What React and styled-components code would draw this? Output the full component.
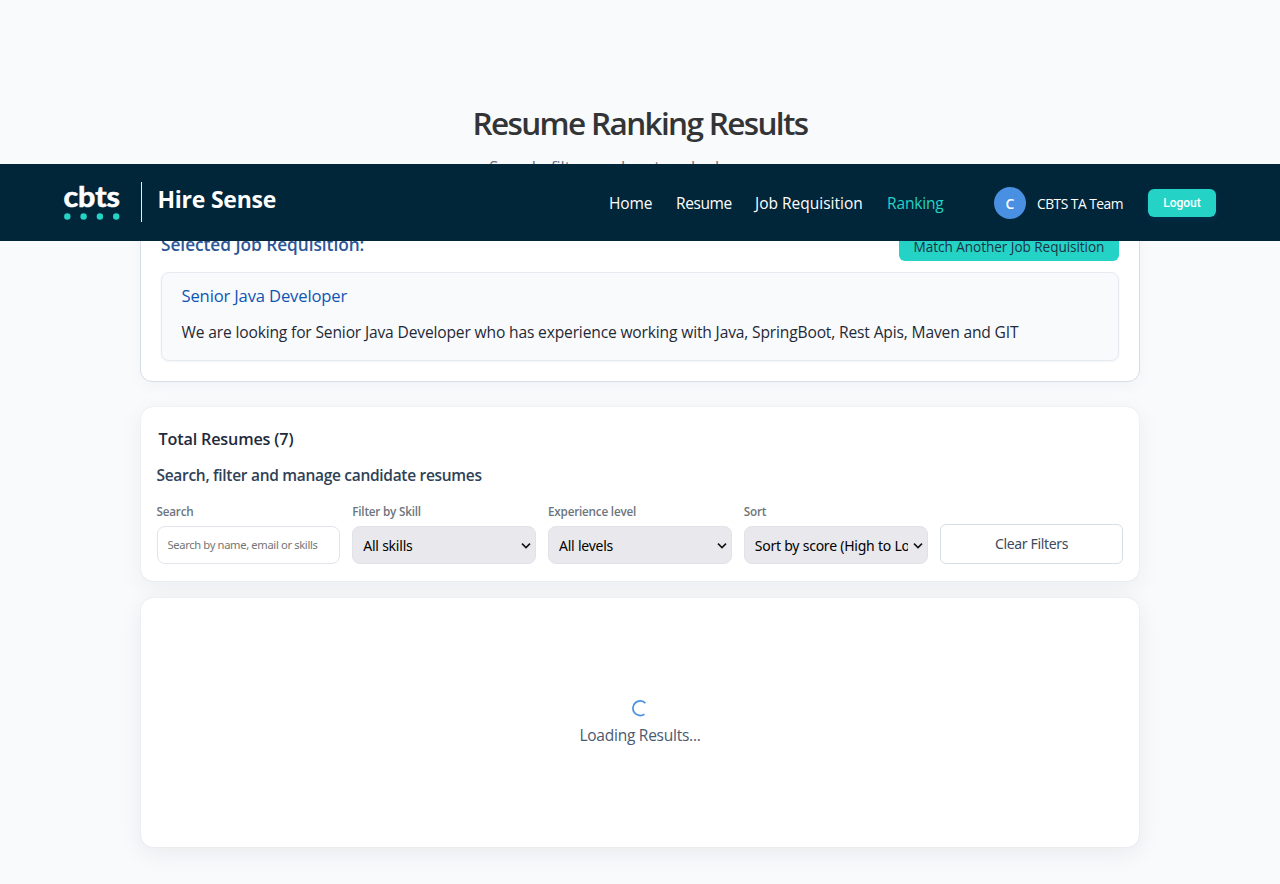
import React from "react";
import styled, { createGlobalStyle } from "styled-components";

const ui = `"Segoe UI", "Open Sans", "Noto Sans", sans-serif`;

const GlobalStyle = createGlobalStyle`
  *, *::before, *::after { box-sizing: border-box; }
  body {
    margin: 0;
    background: #f9fafc;
    font-family: ${ui};
    color: #1f2937;
    height: 884px;
    overflow: hidden;
  }
  h1, h2, h3, p { margin: 0; }
  button, input, select { font-family: "Noto Sans", sans-serif; }
`;

const Navbar = styled.header`
  position: absolute;
  top: 164px;
  left: 0;
  right: 0;
  z-index: 10;
  height: 77px;
  padding: 0 64px;
  display: flex;
  align-items: center;
  background: #022639;
  color: #fff;
  white-space: nowrap;
`;

const Brand = styled.div`
  display: flex;
  align-items: center;
  flex: 1;
  padding-bottom: 1px;
`;

const Divider = styled.span`
  width: 1px;
  height: 40px;
  margin: 0 15.5px 0 21px;
  background: #e6eef2;
`;

const BrandName = styled.span`
  font-size: 23px;
  font-weight: 700;
  line-height: 32px;
  letter-spacing: -0.25px;
  padding-bottom: 6px;
`;

const Nav = styled.nav`
  display: flex;
  gap: 24px;
  margin-right: 50px;
`;

const NavLink = styled.a`
  width: ${(p) => p.$w}px;
  font-size: 15.5px;
  line-height: 24px;
  letter-spacing: ${(p) => p.$ls || 0}px;
  color: ${(p) => (p.$active ? "#24d3c6" : "#fff")};
`;

const Avatar = styled.span`
  width: 32px;
  height: 32px;
  padding-top: 1px;
  border-radius: 50%;
  background: #4a90e2;
  display: flex;
  align-items: center;
  justify-content: center;
  font-size: 14px;
  font-weight: 600;
  margin-right: 11px;
`;

const UserName = styled.span`
  width: 87px;
  margin-right: 24px;
  padding-top: 2px;
  font-size: 13.8px;
  letter-spacing: -0.5px;
`;

const Logout = styled.button`
  width: 68px;
  height: 28px;
  border: 0;
  padding: 0;
  margin-top: 1px;
  border-radius: 6px;
  background: #24d3c6;
  color: #fff;
  font-family: Roboto, sans-serif;
  font-size: 12px;
  font-weight: 500;
  box-shadow: 0 2px 6px rgba(0, 70, 120, 0.35);
`;

const Page = styled.main`
  width: 1000px;
  margin: 0 auto;
  padding-top: 101px;
  display: flex;
  flex-direction: column;
`;

const PageHeading = styled.div`
  text-align: center;
  height: 97px;
`;

const Title = styled.h1`
  font-size: 31.5px;
  line-height: 44px;
  font-weight: 600;
  letter-spacing: -1.65px;
  color: #333436;
`;

const Subtitle = styled.p`
  margin-top: 9px;
  font-size: 16.7px;
  line-height: 26px;
  color: #6c757d;
`;

const JobCard = styled.section`
  height: 183.5px;
  padding: 27px 20px 20px;
  border: 1px solid #d5dde8;
  border-radius: 12px;
  background: #fff;
  box-shadow: 0 4px 16px rgba(15, 35, 60, 0.03);
`;

const JobHeader = styled.div`
  display: flex;
  justify-content: space-between;
  align-items: flex-end;
  height: 35px;
`;

const JobHeading = styled.h2`
  font-size: 17.3px;
  line-height: 28px;
  font-weight: 600;
  letter-spacing: -0.05px;
  color: #2c5796;
  padding-bottom: 2px;
`;

const MatchButton = styled.button`
  width: 220px;
  height: 30px;
  border: 0;
  padding: 1px 0 0;
  border-radius: 6px;
  background: #24d3c6;
  color: #1d3345;
  font-family: ${ui};
  font-size: 13.6px;
  letter-spacing: -0.06px;
  white-space: nowrap;
`;

const JobBox = styled.div`
  height: 89px;
  margin-top: 11px;
  padding: 10px 20px 10px 19.5px;
  border: 1px solid #e5eaf0;
  border-radius: 8px;
  background: #f9fafc;
  box-shadow: 0 1px 3px rgba(15, 35, 60, 0.05);
`;

const JobTitle = styled.h3`
  font-size: 16.6px;
  font-weight: 400;
  line-height: 26px;
  letter-spacing: -0.15px;
  color: #0f55b3;
`;

const JobText = styled.p`
  margin-top: 10px;
  font-size: 15.6px;
  line-height: 26px;
  letter-spacing: -0.16px;
  color: #1f2937;
  white-space: nowrap;
`;

const FilterCard = styled.section`
  height: 174px;
  margin: 25px 1px 0 0.5px;
  padding: 19.5px 15.5px 16px 16px;
  border-radius: 12px;
  background: #fff;
  box-shadow: 0 0 1px rgba(30, 50, 80, 0.2), 0 6px 24px rgba(15, 23, 42, 0.06);
`;

const Total = styled.h2`
  padding-left: 2px;
  font-size: 16.2px;
  line-height: 26px;
  font-weight: 600;
  letter-spacing: -0.17px;
  color: #1f2a3d;
`;

const FilterHeading = styled.h3`
  margin-top: 10px;
  font-size: 15.5px;
  line-height: 26px;
  font-weight: 600;
  letter-spacing: -0.3px;
  color: #2f4156;
`;

const Filters = styled.div`
  display: grid;
  grid-template-columns: repeat(5, 1fr);
  gap: 11.8px;
  align-items: end;
  height: 65px;
  margin-top: 10.5px;
`;

const Field = styled.label`
  display: flex;
  flex-direction: column;
  gap: 7px;
  min-width: 0;
  font-size: 11.7px;
  line-height: 16px;
  font-weight: 600;
  letter-spacing: -0.2px;
  color: #6c757d;
`;

const Search = styled.input`
  width: 100%;
  height: 38px;
  padding: 0 10px;
  border: 1px solid #e2e5ea;
  border-radius: 8px;
  background: #fff;
  font-size: 11.2px;
  letter-spacing: -0.35px;
  outline: 0;
  &::placeholder { color: #757575; opacity: 1; }
`;

const SelectBox = styled.span`
  display: grid;
  align-items: center;
  & > * { grid-area: 1 / 1; }
  svg { justify-self: end; margin: 2px 5px 0 0; pointer-events: none; }
`;

const Select = styled.select`
  appearance: none;
  width: 100%;
  min-width: 0;
  height: 38px;
  padding: 2px 19px 0 10px;
  border: 1px solid #e0e2e9;
  border-radius: 8px;
  background-color: #e9e8ec;
  color: #000;
  font-size: 14px;
  letter-spacing: -0.23px;
`;

const ClearButton = styled.button`
  height: 40px;
  padding-bottom: 1px;
  border: 1px solid #d5dee8;
  border-radius: 6px;
  background: #fff;
  color: #3b4a5f;
  font-size: 14px;
  letter-spacing: -0.35px;
`;

const Results = styled.section`
  height: 249.5px;
  margin: 17px 1px 0 0.5px;
  padding-top: 1px;
  display: flex;
  flex-direction: column;
  align-items: center;
  justify-content: center;
  gap: 6px;
  border-radius: 12px;
  background: #fff;
  box-shadow: 0 0 1px rgba(30, 50, 80, 0.18), 0 6px 24px rgba(15, 23, 42, 0.07);
`;

const Loading = styled.p`
  padding-left: 0.5px;
  font-size: 15.5px;
  line-height: 24px;
  letter-spacing: -0.25px;
  color: #4a5a70;
`;

const LogoMark = styled.svg`
  display: block;
  overflow: visible;
`;

const Logo = () => (
  <LogoMark width="56" height="40" viewBox="0 0 56 40" role="img" aria-label="cbts">
    <text x="-0.6" y="24.8" textLength="56.6" lengthAdjust="spacingAndGlyphs" fontFamily="Lato, sans-serif" fontWeight="700" fontSize="28" fill="#fff" stroke="#fff" strokeWidth="0.6">cbts</text>
    {[3.3, 19.6, 35.9, 52.2].map((x) => (
      <circle key={x} cx={x} cy="34.5" r="3.2" fill="#24d3c6" />
    ))}
  </LogoMark>
);

const Spinner = () => (
  <svg width="18" height="18" viewBox="0 0 18 18" fill="none" stroke="#4a90e2" strokeWidth="1.7">
    <path d="M14.4 4.1A7.3 7.3 0 1 0 13.4 15.2" />
  </svg>
);

const Chevron = () => (
  <svg width="10" height="8" viewBox="0 0 10 8" fill="none" stroke="#111" strokeWidth="1.5">
    <path d="M1 1.6L5 5.6L9 1.6" />
  </svg>
);

const links = [
  { label: "Home", w: 43, ls: -0.15 },
  { label: "Resume", w: 55, ls: -0.4 },
  { label: "Job Requisition", w: 108 },
  { label: "Ranking", w: 57, ls: -0.15, active: true },
];

const selects = [
  { label: "Filter by Skill", value: "All skills" },
  { label: "Experience level", value: "All levels" },
  { label: "Sort", value: "Sort by score (High to Low)" },
];

export default function App() {
  return (
    <>
      <GlobalStyle />
      <Navbar>
        <Brand>
          <Logo />
          <Divider />
          <BrandName>Hire Sense</BrandName>
        </Brand>
        <Nav>
          {links.map((l) => (
            <NavLink key={l.label} $w={l.w} $ls={l.ls} $active={l.active}>{l.label}</NavLink>
          ))}
        </Nav>
        <Avatar>C</Avatar>
        <UserName>CBTS TA Team</UserName>
        <Logout>Logout</Logout>
      </Navbar>
      <Page>
        <PageHeading>
          <Title>Resume Ranking Results</Title>
          <Subtitle>Search, filter, and sort ranked resumes</Subtitle>
        </PageHeading>
        <JobCard>
          <JobHeader>
            <JobHeading>Selected Job Requisition:</JobHeading>
            <MatchButton>Match Another Job Requisition</MatchButton>
          </JobHeader>
          <JobBox>
            <JobTitle>Senior Java Developer</JobTitle>
            <JobText>
              We are looking for Senior Java Developer who has experience working with Java, SpringBoot, Rest Apis, Maven and GIT
            </JobText>
          </JobBox>
        </JobCard>
        <FilterCard>
          <Total>Total Resumes (7)</Total>
          <FilterHeading>Search, filter and manage candidate resumes</FilterHeading>
          <Filters>
            <Field>
              Search
              <Search placeholder="Search by name, email or skills" />
            </Field>
            {selects.map((s) => (
              <Field key={s.label}>
                {s.label}
                <SelectBox>
                  <Select defaultValue={s.value}>
                    <option>{s.value}</option>
                  </Select>
                  <Chevron />
                </SelectBox>
              </Field>
            ))}
            <ClearButton>Clear Filters</ClearButton>
          </Filters>
        </FilterCard>
        <Results>
          <Spinner />
          <Loading>Loading Results...</Loading>
        </Results>
      </Page>
    </>
  );
}
